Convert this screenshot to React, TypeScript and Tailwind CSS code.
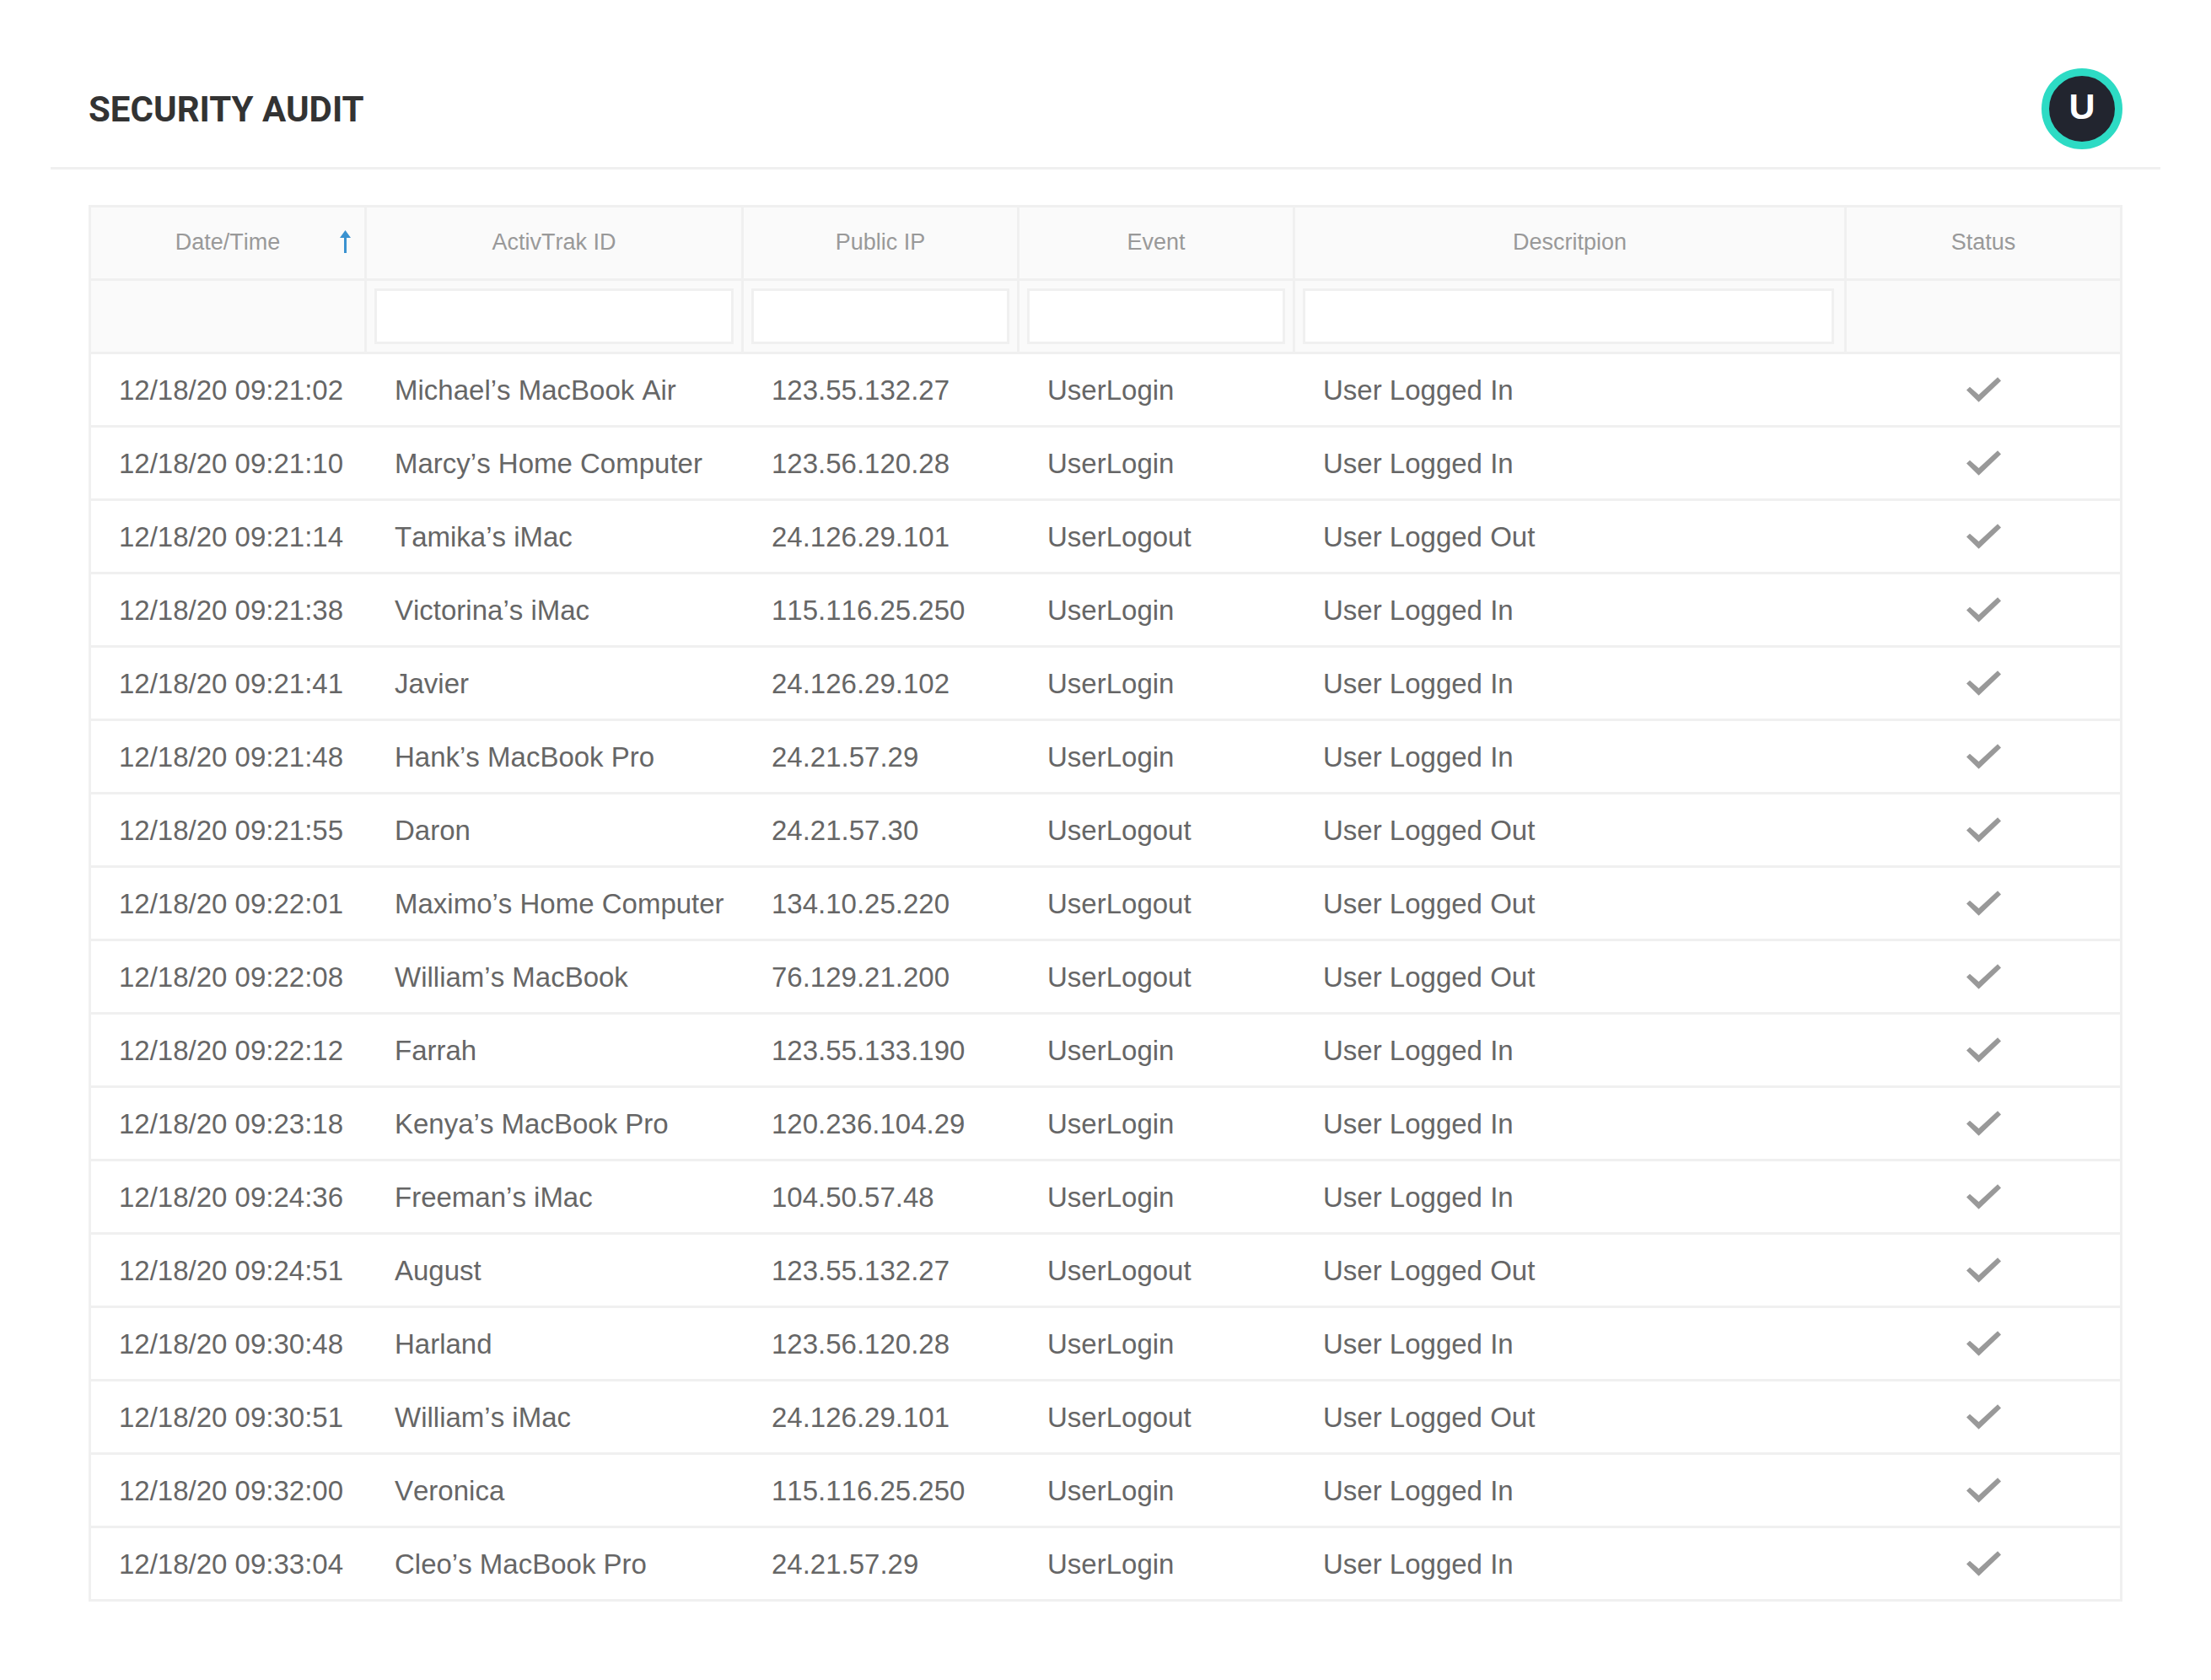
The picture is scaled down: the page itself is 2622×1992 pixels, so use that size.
const rows = [
  ["12/18/20 09:21:02", "Michael’s MacBook Air", "123.55.132.27", "UserLogin", "User Logged In"],
  ["12/18/20 09:21:10", "Marcy’s Home Computer", "123.56.120.28", "UserLogin", "User Logged In"],
  ["12/18/20 09:21:14", "Tamika’s iMac", "24.126.29.101", "UserLogout", "User Logged Out"],
  ["12/18/20 09:21:38", "Victorina’s iMac", "115.116.25.250", "UserLogin", "User Logged In"],
  ["12/18/20 09:21:41", "Javier", "24.126.29.102", "UserLogin", "User Logged In"],
  ["12/18/20 09:21:48", "Hank’s MacBook Pro", "24.21.57.29", "UserLogin", "User Logged In"],
  ["12/18/20 09:21:55", "Daron", "24.21.57.30", "UserLogout", "User Logged Out"],
  ["12/18/20 09:22:01", "Maximo’s Home Computer", "134.10.25.220", "UserLogout", "User Logged Out"],
  ["12/18/20 09:22:08", "William’s MacBook", "76.129.21.200", "UserLogout", "User Logged Out"],
  ["12/18/20 09:22:12", "Farrah", "123.55.133.190", "UserLogin", "User Logged In"],
  ["12/18/20 09:23:18", "Kenya’s MacBook Pro", "120.236.104.29", "UserLogin", "User Logged In"],
  ["12/18/20 09:24:36", "Freeman’s iMac", "104.50.57.48", "UserLogin", "User Logged In"],
  ["12/18/20 09:24:51", "August", "123.55.132.27", "UserLogout", "User Logged Out"],
  ["12/18/20 09:30:48", "Harland", "123.56.120.28", "UserLogin", "User Logged In"],
  ["12/18/20 09:30:51", "William’s iMac", "24.126.29.101", "UserLogout", "User Logged Out"],
  ["12/18/20 09:32:00", "Veronica", "115.116.25.250", "UserLogin", "User Logged In"],
  ["12/18/20 09:33:04", "Cleo’s MacBook Pro", "24.21.57.29", "UserLogin", "User Logged In"],
]

const columns = "grid grid-cols-[327px_447px_327px_327px_654px_324px] h-[87px] border-b-[3px] border-[#f0f0f0]"
const headCell = "relative flex items-center justify-center border-r-[3px] border-[#f0f0f0] pb-[1px]"
const filterCell = "border-r-[3px] border-[#f0f0f0] py-[9px]"
const bodyCell = "flex items-center pl-[33px] pt-[2px] whitespace-nowrap"

function SortArrow() {
  return (
    <svg className="absolute left-[295px] top-[27px]" width="13" height="27" viewBox="0 0 13 27" fill="#3a92d0">
      <path d="M6.5 0 L13 9 H8 V27 H5 V9 H0 Z" />
    </svg>
  )
}

function Check() {
  return (
    <svg width="41" height="30" viewBox="0 0 124 89" fill="#999999">
      <path d="M0 46 L12 35 L44 63 L112 0 L124 13 L44 89 Z" />
    </svg>
  )
}

export default function App() {
  return (
    <div className="min-h-[1992px] bg-white font-['Liberation_Sans',Arial,sans-serif]">
      <header className="mx-[60px] flex items-center justify-between border-b-[3px] border-[#f0f0f0] px-[45px] pt-[81px] pb-[21px]">
        <h1 className="mt-[2px] font-['Roboto',sans-serif] text-[42px] font-bold leading-none text-[#333333]">SECURITY AUDIT</h1>
        <div className="flex h-[96px] w-[96px] items-center justify-center rounded-full border-[9px] border-[#2ddbc4] bg-[#22252f] pb-[6px] text-[43px] font-bold leading-none text-white">
          U
        </div>
      </header>

      <div className="mx-[105px] mt-[42px] border-x-[3px] border-t-[3px] border-[#f0f0f0] [font-kerning:none]">
        <div className={`${columns} bg-[#fafafa] text-[27px] text-[#999999]`}>
          <div className={headCell}>
            Date/Time
            <SortArrow />
          </div>
          <div className={headCell}>ActivTrak ID</div>
          <div className={headCell}>Public IP</div>
          <div className={headCell}>Event</div>
          <div className={headCell}>Descritpion</div>
          <div className="flex items-center justify-center pb-[1px]">Status</div>
        </div>

        <div className={`${columns} bg-[#fafafa]`}>
          <div className={filterCell} />
          <div className={`${filterCell} px-[9px]`}>
            <input className="h-full w-full border-[3px] border-[#f0f0f0] bg-white" />
          </div>
          <div className={`${filterCell} px-[9px]`}>
            <input className="h-full w-full border-[3px] border-[#f0f0f0] bg-white" />
          </div>
          <div className={`${filterCell} px-[9px]`}>
            <input className="h-full w-full border-[3px] border-[#f0f0f0] bg-white" />
          </div>
          <div className={`${filterCell} pl-[9px] pr-[12px]`}>
            <input className="h-full w-full border-[3px] border-[#f0f0f0] bg-white" />
          </div>
          <div />
        </div>

        {rows.map((row) => (
          <div key={row[0]} className={`${columns} text-[33px] text-[#666666]`}>
            {row.map((text, i) => (
              <div key={i} className={bodyCell}>
                {text}
              </div>
            ))}
            <div className="flex items-center justify-center">
              <Check />
            </div>
          </div>
        ))}
      </div>
    </div>
  )
}
